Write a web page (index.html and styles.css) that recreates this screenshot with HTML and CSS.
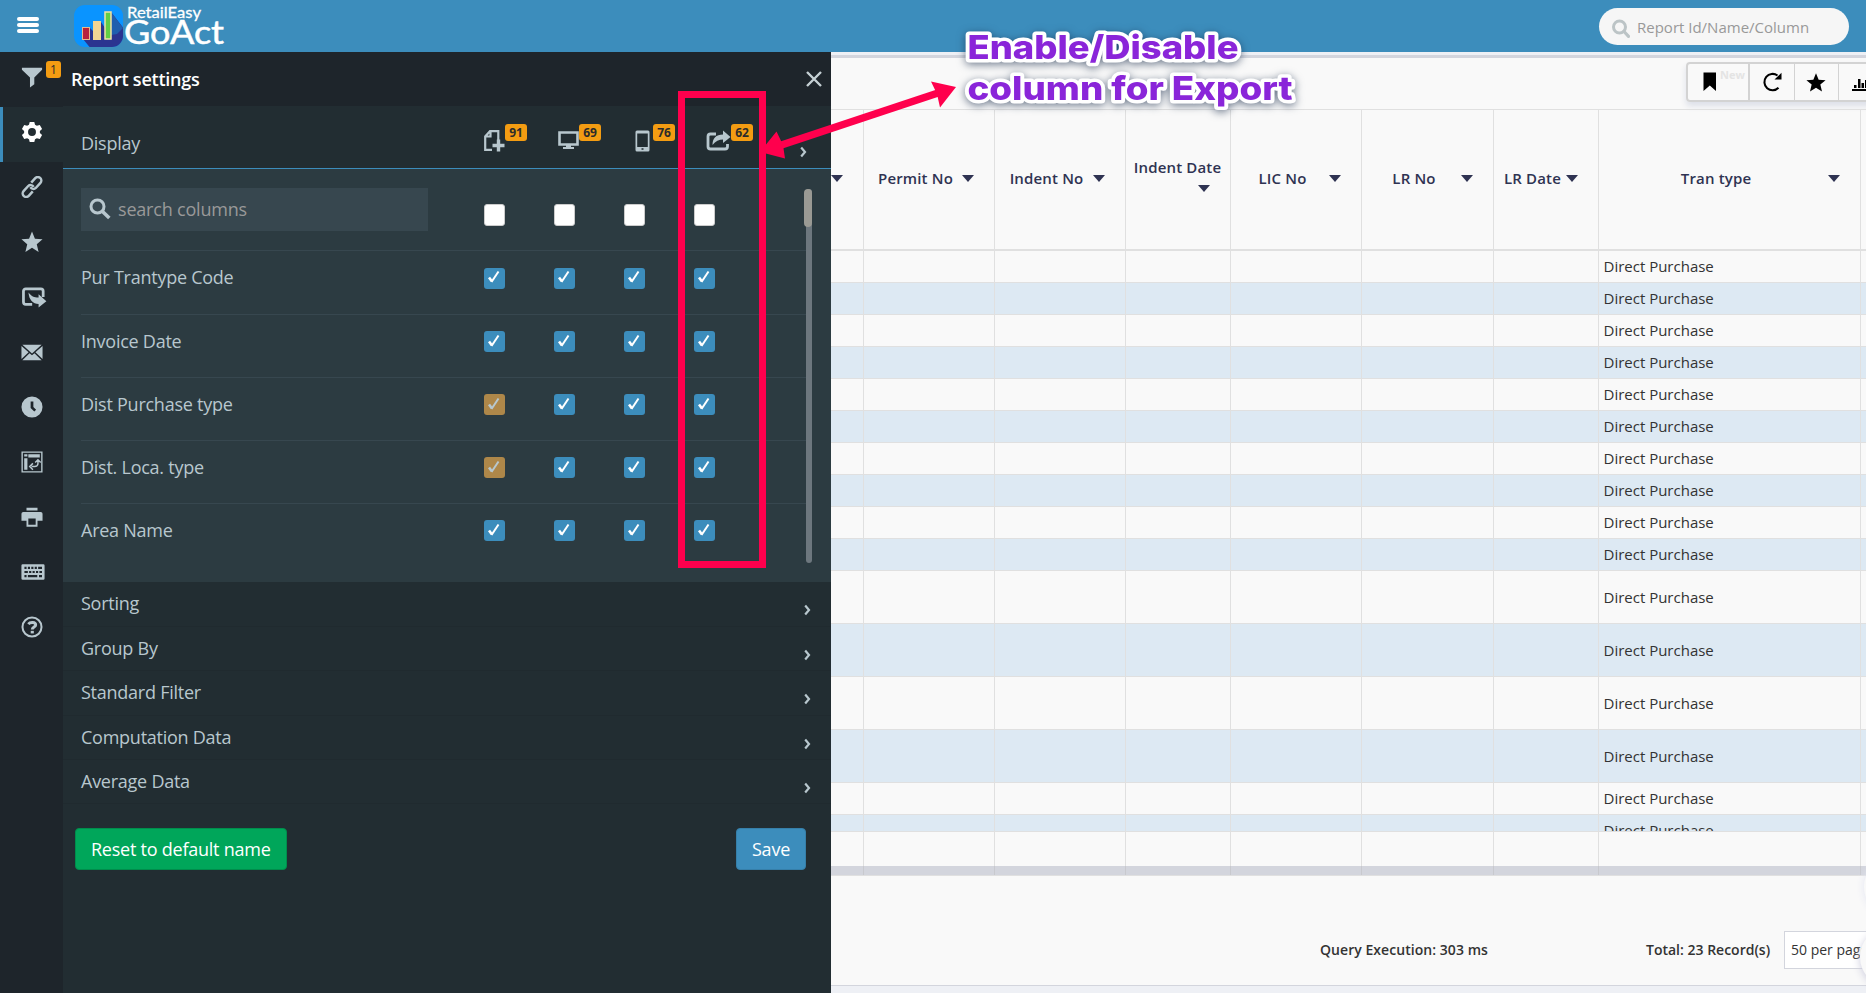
FILE: index.html
```html
<!DOCTYPE html>
<html lang="en">

<head>
    <meta charset="UTF-8">
    <meta name="viewport" content="width=device-width, initial-scale=1.0">
    <title>RetailEasy GoAct</title>
    <link rel="stylesheet" href="styles.css">
</head>

<body>
    <header class="topbar">
        <div class="menu_btn"><span></span><span></span><span></span></div>
        <svg class="logo" width="160" height="52" viewBox="0 0 160 52">
            <defs>
                <clipPath id="tile"><rect x="4" y="5" width="49" height="42" rx="11"/></clipPath>
            </defs>
            <g clip-path="url(#tile)">
                <rect x="4" y="5" width="49" height="42" fill="#0a94ff"/>
                <path d="M20 28l4 4V22h7l4 6V13l6-1 14 18v20H22l-9-11z" fill="#2b3490"/>
                <path d="M41 12l12 16-6 6-6 1z" fill="#1f5fae"/>
            </g>
            <rect x="12.500" y="27.500" width="7" height="12" fill="#b8213c" stroke="#e8b98a"/>
            <rect x="23" y="21" width="8" height="19" fill="#f2d594"/>
            <rect x="35" y="12" width="6" height="27" fill="#62cf45" stroke="#f2e2a8" stroke-width="1.500"/>
            <text x="57" y="18" class="logo_small" textLength="74" lengthAdjust="spacingAndGlyphs">RetailEasy</text>
            <text x="54" y="43.500" class="logo_big" textLength="100" lengthAdjust="spacingAndGlyphs">GoAct</text>
        </svg>
        <div class="report_search">
            <svg width="18" height="19" viewBox="0 0 18 19"><circle cx="7.500" cy="8" r="6" fill="none" stroke="#bcc4c6" stroke-width="3"/><path d="M12 12.500l4.500 4.800" stroke="#bcc4c6" stroke-width="3.200" stroke-linecap="round"/></svg>
            <span>Report Id/Name/Column</span>
        </div>
    </header>

    <div class="wrapper">
        <nav class="sidebar">
            <a><svg viewBox="0 0 24 24"><path d="M1 2h22v2L14.500 12.500V20L9.800 23.500v-11L1 4z"/></svg><b class="badge">1</b></a>
            <a class="active"><svg viewBox="0 0 24 24"><path fill-rule="evenodd" d="M9.500 1h5l.8 3 2 1.200 3.200-.8 2.500 4.200-2.400 2.200v2.400l2.400 2.200-2.500 4.200-3.200-.8-2 1.200-.8 3h-5l-.8-3-2-1.200-3.200.8L1 15.400l2.400-2.200v-2.400L1 8.600l2.500-4.200 3.200.8 2-1.200zM12 7.700a4.300 4.300 0 1 0 0 8.600 4.300 4.300 0 0 0 0-8.600z"/></svg></a>
            <a><svg viewBox="0 0 24 24"><g transform="rotate(-48 12 12)" fill="none" stroke="#b8c7ce" stroke-width="2.700"><path d="M9 15.800H2.500a3.800 3.800 0 0 1 0-7.600H10a3.800 3.800 0 0 1 3.300 5"/><path d="M15 8.200h6.500a3.800 3.800 0 0 1 0 7.600H14a3.800 3.800 0 0 1-3.300-5"/></g></svg></a>
            <a><svg viewBox="0 0 24 24"><path d="M12 .5l3.200 8 8.300.6-6.300 5.300 2 8.600L12 18.300 4.800 23l2-8.600L.5 9.100l8.300-.6z"/></svg></a>
            <a><svg class="wide" viewBox="0 0 28 24"><path d="M12 20H5a2.500 2.500 0 0 1-2.500-2.500v-12A2.500 2.500 0 0 1 5 3h16.500A2.500 2.500 0 0 1 24 5.500V12" fill="none" stroke="#b8c7ce" stroke-width="3"/><path d="M8 7c3 4 6 5.500 11 5.500V9l8.500 7.500-8.500 7v-4C13 19.500 8.500 15 8 7z"/></svg></a>
            <a><svg viewBox="0 0 24 24"><path d="M1.500 4h21L12 13.500zM.5 5.500l7.800 6.800L.5 19.500zM23.500 5.500l-7.800 6.800 7.800 7.200zM1.500 21l7.800-7.700 2.700 2.200 2.700-2.200 7.800 7.700z"/></svg></a>
            <a><svg viewBox="0 0 24 24"><path fill-rule="evenodd" d="M12 .5a11.500 11.500 0 1 0 0 23 11.500 11.500 0 0 0 0-23zM10.500 6h3v6l3 3-2 2-4-4z"/></svg></a>
            <a><svg viewBox="0 0 24 24"><path fill-rule="evenodd" d="M.5.500h23v23H.5zM2 2v20h20V2z"/><path d="M3.500 3.500H7V6H3.500zM8 3.500h12.500V7H8zM3.500 8H7v12.500H3.500z"/><path d="M11.500 17H15a3.500 3.500 0 0 0 3.500-3.500V10M15.500 12.500l3-3 3 3M13 13.500L9.500 17l3.500 3.500" fill="none" stroke="#b8c7ce" stroke-width="1.600"/></svg></a>
            <a><svg viewBox="0 0 24 24"><path fill-rule="evenodd" d="M6 2h12v3H6zM2.500 6.500h19a2 2 0 0 1 2 2V16H18v6.500H6V16H.5V8.500a2 2 0 0 1 2-2zM8 13.500v7h8v-7z"/></svg></a>
            <a><svg class="keys" viewBox="0 0 28 24"><path fill-rule="evenodd" d="M2 3h24a1.500 1.500 0 0 1 1.500 1.500v15A1.500 1.500 0 0 1 26 21H2a1.500 1.500 0 0 1-1.500-1.500v-15A1.500 1.500 0 0 1 2 3zM4 6v2.500h2.500V6zM8 6v2.500h2.500V6zM12 6v2.500h2.500V6zM16 6v2.500h2.500V6zM20 6v2.500h4.500V6zM4 10.700v2.500h4v-2.500zM9.500 10.700v2.500H12v-2.500zM13.500 10.700v2.500H16v-2.500zM17.500 10.700v2.500H20v-2.500zM21.500 10.700v2.500h3v-2.500zM4 15.500V18h2.500v-2.500zM8 15.500V18h11v-2.500zM21 15.500V18h3.500v-2.500z"/></svg></a>
            <a><svg viewBox="0 0 24 24"><circle cx="12" cy="12" r="10.400" fill="none" stroke="#b8c7ce" stroke-width="2.200"/><path d="M8 8.800C10 6.300 16 6.300 16 9.800c0 2.400-3.700 2.200-3.700 4.900" fill="none" stroke="#b8c7ce" stroke-width="3.200"/><path d="M10.600 16.200h3.400V19h-3.400z"/></svg></a>
        </nav>

        <section class="panel">
            <div class="panel_title">
                <h1>Report settings</h1>
                <svg width="16" height="16" viewBox="0 0 16 16"><path d="M1 1l14 14M15 1L1 15" stroke="#c5d0d4" stroke-width="2.400"/></svg>
            </div>
            <div class="display_head">
                <span class="label">Display</span>
                <div class="kind"><svg width="21" height="22" viewBox="0 0 21 22"><path d="M8 19.800H1.200V6.500L6 1.200h8.300V10M6.500 1v5.500H1" fill="none" stroke="#b8c7ce" stroke-width="2.200"/><path d="M14.500 9.500v12M8.500 15.500h12" stroke="#b8c7ce" stroke-width="3.400"/></svg><b class="badge">91</b></div>
                <div class="kind"><svg width="21" height="20" viewBox="0 0 21 20"><path d="M1.500 2.500h18v12h-18z" fill="none" stroke="#b8c7ce" stroke-width="2.600"/><path d="M8 15h5v2h3v2H5v-2h3z"/></svg><b class="badge">69</b></div>
                <div class="kind"><svg width="15" height="22" viewBox="0 0 15 22"><path fill-rule="evenodd" d="M2 .5h11A1.500 1.500 0 0 1 14.500 2v18a1.500 1.500 0 0 1-1.500 1.500H2A1.500 1.500 0 0 1 .5 20V2A1.500 1.500 0 0 1 2 .5zM2.200 3.500V17h10.600V3.500zM6.500 18.300v1.400h2v-1.400z"/></svg><b class="badge">76</b></div>
                <div class="kind"><svg width="25" height="21" viewBox="0 0 25 21"><path d="M10 4H4.500A2.500 2.500 0 0 0 2 6.500v10A2.500 2.500 0 0 0 4.500 19H19a2.500 2.500 0 0 0 2.500-2.500V14" fill="none" stroke="#b8c7ce" stroke-width="2.800"/><path d="M6.500 15C6.500 8.500 10 4.500 17 4.500V.5L24.500 7 17 13V9.500c-4 0-7.500 1.500-10.500 5.500z"/></svg><b class="badge">62</b></div>
                <svg class="chevron" width="7" height="12" viewBox="0 0 7 12"><path d="M1.200 1.500L5 6l-3.800 4.500" fill="none" stroke="#b8c7ce" stroke-width="2.200"/></svg>
            </div>

            <div class="columns">
                <div class="column_row first">
                    <div class="column_search">
                        <svg width="22" height="22" viewBox="0 0 22 22"><circle cx="8.500" cy="8.500" r="6.500" fill="none" stroke="#b8c7ce" stroke-width="3"/><path d="M13 13l7.300 7" stroke="#b8c7ce" stroke-width="3.600"/></svg>
                        <span>search columns</span>
                    </div>
                    <i class="check empty"></i><i class="check empty"></i><i class="check empty"></i><i class="check empty"></i>
                </div>
                <div class="column_list"></div>
                <div class="scrollbar"><div class="thumb"></div></div>
            </div>

            <ul class="sections"></ul>
            <div class="panel_footer">
                <button class="btn green">Reset to default name</button>
                <button class="btn blue">Save</button>
            </div>
        </section>

        <main class="content">
            <div class="toolbar_row">
                <div class="toolbar">
                    <div class="tool mark"><svg width="14" height="20" viewBox="0 0 14 20"><path d="M.5.500H13v18.500l-6.200-5.500L.5 19z"/></svg><sup>New</sup></div>
                    <div class="tool"><svg width="20" height="20" viewBox="0 0 20 20"><path d="M16.500 15.800A8.200 8.200 0 1 1 15.500 3.500" fill="none" stroke="#000" stroke-width="2.100"/><path d="M19.500.8v6.700H12.500z"/></svg></div>
                    <div class="tool"><svg width="20" height="20" viewBox="0 0 24 24"><path d="M12 1.500l3.200 7.700 8.300.6-6.300 5.300 2 8.200L12 18.800l-7.200 4.500 2-8.200L.5 9.800l8.300-.6z"/></svg></div>
                    <div class="tool chart"><svg width="24" height="16" viewBox="0 0 24 16"><path d="M0 13h24v2H0zM2 9h2.500v3H2zM6 3h2.500v9H6zM9.500 7H12v5H9.500zM13 4h2.500v8H13z"/></svg></div>
                </div>
            </div>
            <div class="grid head">
                <div><s></s></div>
                <div>Permit No<s></s></div>
                <div>Indent No<s></s></div>
                <div class="two_line">Indent Date<s></s></div>
                <div>LIC No<s></s></div>
                <div>LR No<s></s></div>
                <div>LR Date<s></s></div>
                <div>Tran type<s></s></div>
                <div></div>
            </div>
            <div class="grid_body"></div>
            <div class="grid total"><div></div><div></div><div></div><div></div><div></div><div></div><div></div><div></div><div></div></div>
            <div class="grid hscroll"><div></div><div></div><div></div><div></div><div></div><div></div><div></div><div></div><div></div></div>
            <footer class="pager">
                <span class="query">Query Execution: 303 ms</span>
                <span class="records">Total: 23 Record(s)</span>
                <div class="per_page">50 per page</div>
            </footer>
            <div class="bottom_strip"></div>
            <div class="bubble top"></div>
            <div class="bubble"></div>
        </main>
    </div>

    <!-- callout over the export column -->
    <div class="export_box"></div>
    <svg class="callout" width="640" height="180" viewBox="700 0 640 180">
        <path d="M780 145.500L938 93" stroke="#ff004d" stroke-width="7.500"/>
        <path d="M760 152l16.500-20.500 6.500 13.500 2 13.500zM956 87l-16 20.500-3-13.500-6-12.500z" fill="#ff004d"/>
        <g class="callout_text">
            <text x="967.500" y="59" textLength="271" lengthAdjust="spacingAndGlyphs">Enable/Disable</text>
            <text x="967.500" y="99.500" textLength="325" lengthAdjust="spacingAndGlyphs">column for Export</text>
        </g>
    </svg>

    <script>
        const columns = [
            { name: 'Pur Trantype Code' },
            { name: 'Invoice Date' },
            { name: 'Dist Purchase type', locked: true },
            { name: 'Dist. Loca. type', locked: true },
            { name: 'Area Name' },
        ]
        const tick = '<svg width="12" height="14" viewBox="0 0 12 14"><path d="M1 7.500l2.800 3.800" fill="none" stroke="currentColor" stroke-width="2.600"/><path d="M3.500 12L10.500 1.500" fill="none" stroke="currentColor" stroke-width="2"/></svg>'

        document.querySelector('.column_list').innerHTML = columns.map(function(c){
            let checks = ''
            for(let i = 0; i < 4; i++){
                checks += `<i class="check ${c.locked && i === 0 ? 'locked' : ''}">${tick}</i>`
            }
            return `<div class="column_row"><span class="name">${c.name}</span>${checks}</div>`
        }).join('')

        const sections = ['Sorting', 'Group By', 'Standard Filter', 'Computation Data', 'Average Data']
        const arrow = '<svg width="7" height="12" viewBox="0 0 7 12"><path d="M1.200 1.500L5 6l-3.800 4.500" fill="none" stroke="#b8c7ce" stroke-width="2.200"/></svg>'
        document.querySelector('.sections').innerHTML = sections.map(function(s){
            return `<li><span>${s}</span>${arrow}</li>`
        }).join('')

        // ten single line rows, four taller ones, then the rest
        const heights = [32, 32, 32, 32, 32, 32, 32, 32, 32, 32, 53, 53, 53, 53, 32, 32]
        document.querySelector('.grid_body').innerHTML = heights.map(function(h){
            return `<div class="grid row ${h > 32 ? 'tall' : ''}">${'<div></div>'.repeat(7)}<div>Direct Purchase</div><div></div></div>`
        }).join('')
    </script>
</body>

</html>
```

FILE: styles.css
```css
* {
    box-sizing: border-box;
}

body {
    margin: 0;
    height: 998px;
    overflow: hidden;
    background: #fff;
    font-family: "Open Sans", "Noto Sans", sans-serif;
    font-size: 18px;
}

.topbar {
    display: flex;
    height: 52px;
    padding-right: 17px;
    background: #3c8dbc;
}

.menu_btn {
    display: flex;
    flex-direction: column;
    justify-content: space-between;
    width: 22px;
    height: 16px;
    margin: 17px 0 0 17px;
}

.menu_btn span {
    height: 4px;
    border-radius: 2px;
    background: #fff;
}

.logo {
    margin-left: 31px;
}

.logo text {
    fill: #fff;
    stroke: #fff;
    stroke-width: 0.3px;
    font-family: Lato, sans-serif;
}

.logo .logo_small {
    font-size: 16px;
}

.logo .logo_big {
    font-size: 32px;
    stroke-width: 0.5px;
}

.report_search {
    display: flex;
    align-items: center;
    width: 250px;
    height: 37px;
    margin: 8px 0 0 auto;
    padding-left: 13px;
    border-radius: 19px;
    background: #f6f6f6;
    color: #999;
    font-size: 15px;
}

.report_search svg {
    margin: 3px 7px 0 0;
}

.wrapper {
    display: flex;
    height: 941px;
}

.sidebar {
    width: 63px;
    flex: none;
    background: #1e252b;
}

.sidebar a {
    position: relative;
    display: flex;
    align-items: center;
    height: 55px;
    padding-left: 21px;
    border-left: 0 solid #3c8dbc;
}

.sidebar svg {
    width: 22px;
    height: 22px;
    margin-top: -5px;
    fill: #b8c7ce;
}

.sidebar .wide {
    width: 26px;
}

.sidebar .keys {
    width: 24px;
}

.sidebar .active {
    padding-left: 18px;
    border-left-width: 3px;
    background: #222d32;
}

.sidebar .active svg {
    fill: #fff;
}

.badge {
    padding: 0 4px;
    border-radius: 3px;
    background: #f39c12;
    color: #2b2b2b;
    font-size: 12px;
    font-weight: 700;
    line-height: 17px;
    text-align: center;
}

.sidebar .badge {
    position: absolute;
    top: 9px;
    left: 46px;
    width: 15px;
    font-weight: 400;
}

.panel {
    width: 768px;
    flex: none;
    background: #222d32;
    color: #b8c7ce;
    letter-spacing: -0.25px;
}

.panel_title {
    display: flex;
    align-items: center;
    justify-content: space-between;
    height: 54px;
    padding: 0 9px 1px 8px;
    background: #1e252b;
}

.panel_title h1 {
    margin: 0;
    color: #fff;
    font-size: 18px;
    font-weight: 600;
}

.display_head {
    display: flex;
    height: 63px;
    padding-left: 18px;
    border-bottom: 1px solid #3c8dbc;
}

.display_head .label {
    width: 403px;
    padding-top: 25px;
}

.kind {
    display: flex;
    align-items: flex-start;
    width: 74px;
    padding-top: 18px;
}

.kind svg {
    flex: none;
    margin-top: 6px;
    fill: #b8c7ce;
}

.kind .badge {
    width: 22px;
    letter-spacing: 0;
}

.kind:nth-child(4) {
    padding-left: 3px;
}

.kind:nth-child(4) .badge {
    margin-left: 3px;
}

.display_head .chevron {
    margin: 40px 24px 0 auto;
}

.columns {
    position: relative;
    height: 413px;
    padding: 0 25px 0 18px;
    background: #2c3b41;
}

.column_row {
    display: flex;
    align-items: center;
    height: 63px;
    border-top: 1px solid #37474f;
}

.column_row.first {
    height: 81px;
    border: none;
}

.column_row:nth-child(1):not(.first) {
    height: 64px;
}

.column_search {
    display: flex;
    align-items: center;
    width: 347px;
    height: 43px;
    margin: -1px 56px 0 0;
    padding-left: 8px;
    background: #37474f;
    color: #999;
    letter-spacing: -0.2px;
}

.column_search svg {
    margin-right: 7px;
}

.name {
    width: 402px;
    margin: -11px 1px 0 0;
}

.check {
    display: flex;
    align-items: center;
    justify-content: center;
    width: 21px;
    height: 21px;
    margin: 11px 49px 0 0;
    border-radius: 3px;
    background: #3c8dbc;
    color: #fff;
}

.column_list .check {
    margin-top: -9px;
    padding: 0 2px 2px 0;
}

.check.empty {
    height: 22px;
    border: 1px solid #ccc;
    background: #fff;
}

.check.locked {
    background: #ae8749;
    color: #b8c7ce;
}

.scrollbar {
    position: absolute;
    top: 20px;
    right: 19px;
    width: 6px;
    height: 374px;
    border-radius: 3px;
    background: #6d777e;
}

.thumb {
    width: 8px;
    height: 38px;
    margin-left: -2px;
    border-radius: 4px;
    background: #9a9a94;
}

.sections {
    margin: 0;
    padding: 0;
    list-style: none;
}

.sections li {
    display: flex;
    justify-content: space-between;
    height: 44.250px;
    padding: 9px 20px 0 18px;
    border-bottom: 1px solid #202a2f;
}

.sections li:first-child {
    height: 45px;
}

.sections svg {
    margin-top: 13px;
}

.panel_footer {
    display: flex;
    justify-content: space-between;
    padding: 24px 25px 0 12px;
}

.btn {
    height: 42px;
    padding: 0 15px;
    border: 1px solid #008d4c;
    border-radius: 4px;
    background: #00a65a;
    color: #fff;
    font: 18px "Open Sans", sans-serif;
    letter-spacing: -0.24px;
}

.btn.blue {
    border-color: #367fa9;
    background: #3c8dbc;
}

.content {
    position: relative;
    flex: 1;
    min-width: 0;
    overflow: hidden;
    border-top: 3px solid #eef0f5;
    background: #f9f9f9;
    color: #333;
    font-size: 15px;
}

.toolbar_row {
    height: 54px;
    padding: 4px 0 0 856px;
    border-top: 3px solid #d3d5dd;
}

.toolbar {
    display: flex;
    width: 260px;
    height: 40px;
    margin-left: -1px;
    border: 2px solid #d3d3d3;
    border-radius: 4px;
    box-shadow: 0 4px 6px #dcdfe8;
}

.tool {
    display: flex;
    align-items: center;
    justify-content: center;
    flex: none;
    width: 44.500px;
    border-right: 1px solid #d3d3d3;
}

.tool.mark {
    width: 62px;
    border-right-width: 2px;
    justify-content: flex-start;
    padding-left: 15px;
}

.tool.chart {
    width: 100px;
    justify-content: flex-start;
    padding: 4px 0 0 13px;
}

.tool sup {
    margin: -16px 0 0 3px;
    color: #e4e4e4;
    font-size: 11px;
    font-weight: 700;
}

/* the column on the left runs on under the panel */
.grid {
    display: grid;
    grid-template-columns: 33px 131px 131px 105px 131px 132px 105px 262px 5px;
}

.grid > div {
    display: flex;
    align-items: center;
    padding: 0 0 2px 4.500px;
    border-right: 1px solid #e0e0e0;
}

.grid > div:last-child {
    border-right: none;
}

.grid.head {
    height: 142px;
    border-top: 1px solid #e0e0e0;
    border-bottom: 2px solid #e0e0e0;
    color: #2f3352;
    font-weight: 600;
    letter-spacing: 0.15px;
}

.head > div {
    position: relative;
    justify-content: center;
    padding: 0 27px 4px 0;
}

.head s {
    position: absolute;
    top: 65px;
    right: 20px;
    border: 6px solid transparent;
    border-top: 7px solid #2f3352;
    border-bottom: none;
}

.head .two_line {
    padding: 0 1px 25px 0;
}

.head .two_line s {
    top: 75px;
}

.grid_body {
    height: 580px;
    overflow: hidden;
}

.row {
    height: 32px;
    border-bottom: 1px solid #e0e0e0;
}

.row.tall {
    height: 53px;
}

.row.tall > div {
    padding-bottom: 0;
}

.row:nth-child(even) {
    background: #dde9f3;
}

.grid.total {
    height: 35px;
    border-top: 1px solid #e0e0e0;
}

.grid.hscroll {
    height: 10px;
    border-bottom: 1px solid #e0e0e0;
    background: #d3d5dd;
}

.hscroll > div {
    border-color: #c8c9ce;
}

.pager {
    display: flex;
    align-items: center;
    height: 110px;
    padding: 38px 0 0 489px;
    border-bottom: 1px solid #d3d5dd;
    font-size: 14px;
    font-weight: 600;
}

.query {
    flex: none;
    width: 326px;
    letter-spacing: 0.05px;
}

.records {
    flex: none;
    width: 138px;
}

.per_page {
    width: 120px;
    height: 38px;
    flex: none;
    padding-left: 6px;
    border: 1px solid #d3d5dd;
    background: #fff;
    font-weight: 400;
    line-height: 36px;
}

.bottom_strip {
    height: 10px;
    background: #eef0f5;
}

/* round floating buttons that peek in from the right edge */
.bubble {
    position: absolute;
    right: -54px;
    bottom: 6px;
    width: 60px;
    height: 60px;
    border-radius: 50%;
    background: #f9f9f9;
    box-shadow: 0 2px 8px #ccd;
}

.bubble.top {
    bottom: 76px;
    right: -58px;
    box-shadow: 0 0 8px #e4e6f2;
}

.export_box {
    position: absolute;
    left: 678px;
    top: 91px;
    width: 88px;
    height: 477px;
    border: 7px solid #ff004d;
}

.callout {
    position: absolute;
    left: 700px;
    top: 0;
}

.callout_text {
    fill: #8a25d9;
    stroke: #fff;
    stroke-width: 7px;
    stroke-linejoin: round;
    paint-order: stroke;
    font: 800 33px Inter, sans-serif;
    filter: drop-shadow(0 2px 4px rgba(20, 40, 70, 0.6));
}
```
